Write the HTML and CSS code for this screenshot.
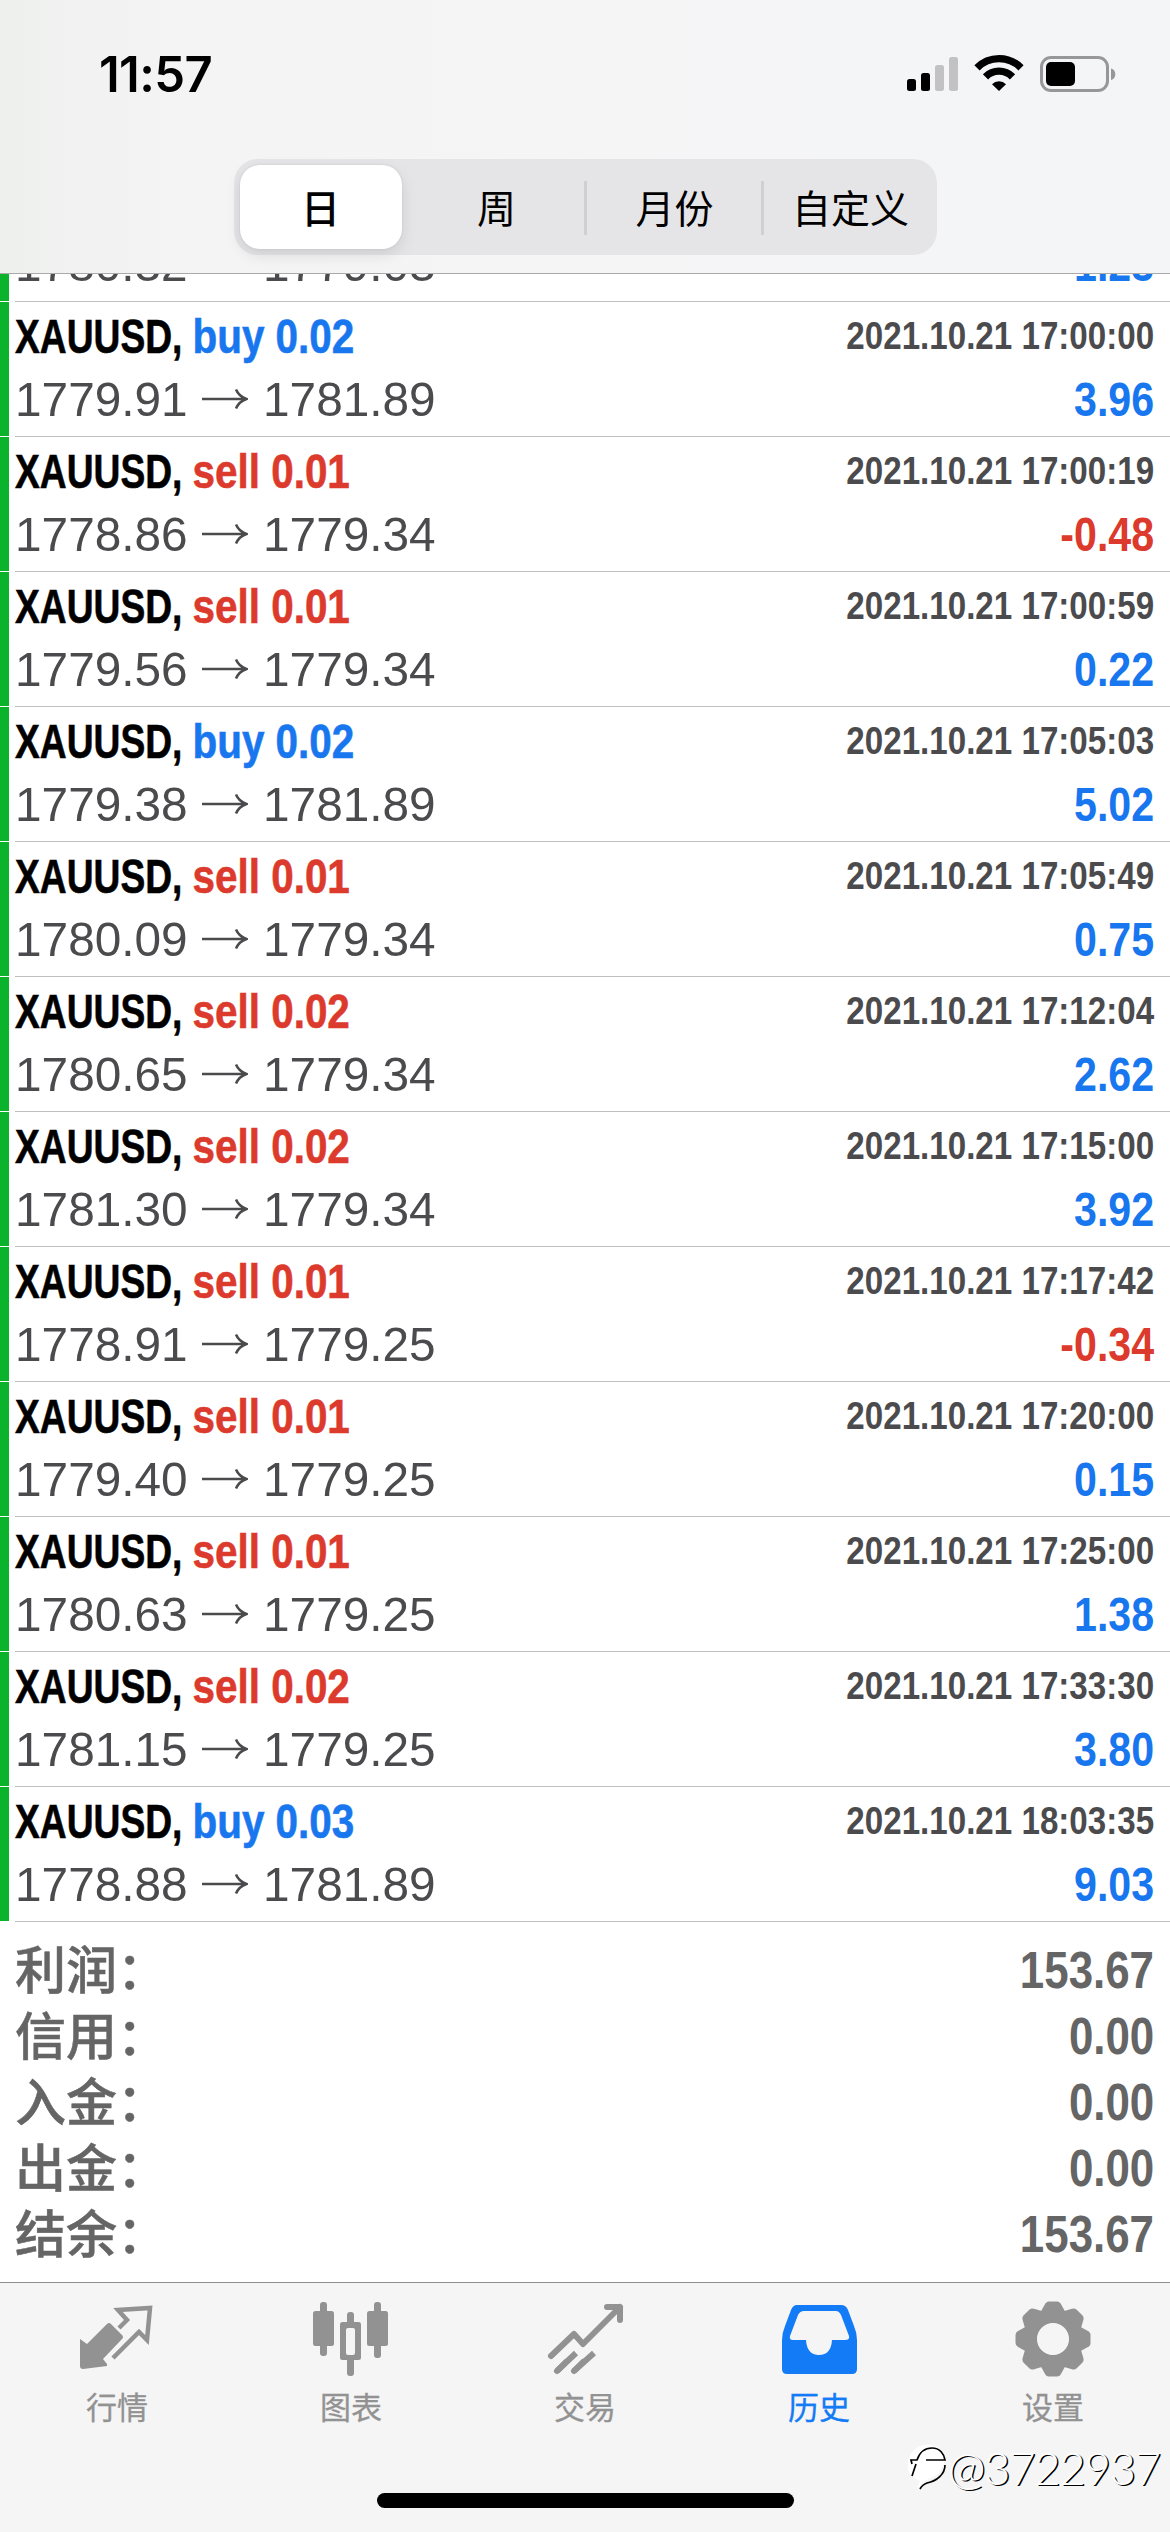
FILE: index.html
```html
<!DOCTYPE html>
<html lang="zh-CN">
<head>
<meta charset="utf-8">
<title>历史</title>
<link rel="stylesheet" href="styles.css">
</head>
<body>
<div class="screen">
  <header class="header">
    <div class="status">
      <span class="clock">11:57</span>
      <svg class="status-icons" width="214" height="44" viewBox="0 0 214 44">
        <g><rect x="1" y="25" width="9" height="12" rx="2.5"/><rect x="15" y="19" width="9" height="18" rx="2.5"/>
        <rect x="29" y="11" width="9" height="26" rx="2.5" fill="#c2c2c4"/><rect x="43" y="3" width="9" height="34" rx="2.5" fill="#c2c2c4"/></g>
        <g fill="none" stroke="#000" stroke-width="7.4"><path d="M71 13.800a31 31 0 0 1 44 0"/><path d="M79.500 22.800a19 19 0 0 1 27 0"/></g>
        <path d="M86 30.200a10 10 0 0 1 14 0L93 37z"/>
        <rect x="135.500" y="3.500" width="66" height="33" rx="9.500" fill="none" stroke="#97979a" stroke-width="3"/>
        <rect x="140" y="8" width="29" height="24" rx="5"/>
        <path d="M205 14.500a6 6 0 0 1 0 11.500z" fill="#97979a"/>
      </svg>
    </div>
    <nav class="segments">
      <span class="segment selected">日</span><span class="segment week">周</span><span class="segment divided month">月份</span><span class="segment divided last">自定义</span>
    </nav>
  </header>
  <main class="history" id="history"></main>
  <section class="totals">
    <div class="total"><span>利润：</span><b>153.67</b></div>
    <div class="total"><span>信用：</span><b>0.00</b></div>
    <div class="total"><span>入金：</span><b>0.00</b></div>
    <div class="total"><span>出金：</span><b>0.00</b></div>
    <div class="total"><span>结余：</span><b>153.67</b></div>
  </section>
  <footer class="tabbar">
    <div class="tab"><svg width="78" height="78" viewBox="0 0 78 78">
      <path fill="currentColor" d="M2 34l7 5 20-20q2-2 4 0l11 11q2 2 0 4L25 54l4 5v2L5 64q-3 0-3-3z"/>
      <path fill="none" stroke="currentColor" stroke-width="4.500" d="M41 23l8-8-9-10 32-2-3 32-8-8-26 26"/></svg><span>行情</span></div>
    <div class="tab"><svg width="78" height="78" viewBox="0 0 78 78" fill="currentColor">
      <rect x="1" y="6" width="21" height="35" rx="2.500"/><rect x="8" y="-3" width="7" height="54" rx="3"/>
      <rect x="55" y="6" width="21" height="35" rx="2.500"/><rect x="62" y="-3" width="7" height="56" rx="3"/>
      <rect x="35" y="7" width="7" height="14" rx="3"/><rect x="35" y="50" width="7" height="21" rx="3"/>
      <path fill-rule="evenodd" d="M30.500 17h16q2.500 0 2.500 2.500v33q0 2.500-2.500 2.500h-16q-2.500 0-2.500-2.500v-33q0-2.500 2.500-2.500zM34 25v23q0 2 2 2h5q2 0 2-2V25q0-2-2-2h-5q-2 0-2 2z"/></svg><span>图表</span></div>
    <div class="tab"><svg width="78" height="78" viewBox="0 0 78 78" fill="none" stroke="currentColor" stroke-width="6">
      <path stroke-linecap="round" stroke-linejoin="round" d="M5 51l23-22 9 10L74 2M61 2h13v13"/>
      <path stroke-linecap="round" d="M11 66l9-9M28 66l9-9"/><path d="M11 66l19-18M28 66l20-18"/></svg><span>交易</span></div>
    <div class="tab active"><svg width="78" height="78" viewBox="0 0 78 78">
      <path fill="currentColor" fill-rule="evenodd" d="M17 0h44q5 0 7 5l6 16q3 7 3 14v29q0 5-5 5H7q-5 0-5-5V35q0-7 3-14l6-16q2-5 6-5zM24 6q-4 0-6 4L10 31q-1 4 3 4h13q1 15 13 15t13-15h13q5 0 4-4l-8-21q-2-4-5-4z"/></svg><span>历史</span></div>
    <div class="tab"><svg width="78" height="78" viewBox="-39 -34 78 78" fill="currentColor"><g id="gear"></g></svg><span>设置</span></div>
    <div class="home"></div>
    <div class="watermark"><svg width="40" height="48" viewBox="0 0 40 48">
      <path fill="#fff" d="M4 8Q14-4 30 3c14 14 2 30-12 33L9 45l3-8Q-8 28 4 8z"/>
      <path fill="none" stroke="#000" stroke-width="1.700" d="M4 20l-1-4h6Q13 4 24 4c8 0 12 6 13 12H18M8 20L4 32M37 21c0 9-8 16-18 18q-5 2-7 6"/></svg><span>@3722937</span></div>
  </footer>
</div>
<script src="app.js"></script>
</body>
</html>
```
FILE: styles.css
```css
* { box-sizing: border-box; }
body { margin: 0; background: #fff; }
.screen { width: 1170px; height: 2532px; display: flex; flex-direction: column; overflow: hidden; font-family: "Liberation Sans", "Noto Sans CJK SC", sans-serif; }
.header { position: relative; z-index: 1; height: 274px; flex: none; border-bottom: 1px solid #aaa; background: linear-gradient(90deg, #edf0ed 0, #f2f2f2 90px, #f5f4f4 200px, #f5f5f6 600px, #f4f5f7 1170px); }
.status { height: 159px; padding: 54px 50px 0 99px; display: flex; justify-content: space-between; align-items: flex-start; }
.clock { font: 600 49px/42px Inter, sans-serif; letter-spacing: -.6px; }
.segments { width: 703px; height: 96px; margin: 0 auto; padding: 6px; border-radius: 24px; background: #e5e5e7; display: grid; grid-template-columns: 162px 182px 177px 170px; }
.segment { display: flex; align-items: center; justify-content: center; font: 400 39px/50px "Noto Sans CJK SC", sans-serif; color: #000; position: relative; padding-bottom: 3px; }
.segment.week { padding-left: 8px; }
.segment.month { padding-left: 5px; }
.segment.last { padding-left: 10px; }
.segment.selected { background: #fff; border-radius: 20px; font-weight: 500; box-shadow: 0 6px 16px rgba(0,0,0,.1), 0 0 3px rgba(0,0,0,.08); }
.divided::before { content: ""; position: absolute; left: 0; top: 16px; width: 3px; height: 54px; background: #d0d0d2; }
.history { height: 1648px; flex: none; display: flex; flex-direction: column; justify-content: flex-end; overflow: hidden; }
.deal { height: 135px; flex: none; display: flex; border-bottom: 1px solid #fff; }
.bar { width: 9px; height: 134px; background: #0bb32c; flex: none; }
.body { flex: 1; height: 135px; margin-left: 6px; padding-right: 16px; border-bottom: 1px solid #c0c0c2; display: grid; grid-template-rows: 65px 63px; grid-template-columns: 1fr auto; white-space: nowrap; }
.body > * { align-self: center; }
.name, .date, .profit { font-weight: 700; }
.name { font-size: 49px; line-height: 60px; transform: scaleX(.825); transform-origin: left; padding-top: 3px; -webkit-text-stroke: .6px currentColor; }
.name i { font-style: normal; display: inline-block; transform: scaleX(.92); transform-origin: left; margin-right: -19px; }
.date { font-size: 39px; line-height: 50px; color: #4b4b4e; transform: scaleX(.85); transform-origin: right; padding-top: 3px; }
.profit { font-size: 49px; line-height: 60px; text-align: right; transform: scaleX(.84); transform-origin: right; }
.prices { display: flex; align-items: center; color: #4b4b4e; }
.price { width: 187px; font-size: 49px; line-height: 60px; }
.price span { display: inline-block; transform: scaleX(.975); transform-origin: left; }
.arrow { width: 46px; height: 22px; margin-right: 15px; }
.blue { color: #1877ee; }
.red { color: #dc3a2c; }
.totals { flex: 1; padding: 15px 16px 0 15px; color: #656565; }
.total { height: 66px; display: flex; justify-content: space-between; align-items: center; }
.total span { font: 500 51px/66px "Noto Sans CJK SC", sans-serif; -webkit-text-stroke: .5px currentColor; padding-bottom: 7px; }
.total b { font-size: 51px; line-height: 66px; transform: scaleX(.86); transform-origin: right; padding-top: 1px; }
.tabbar { position: relative; height: 250px; flex: none; border-top: 1px solid #8e8e90; background: #f5f5f5; display: grid; grid-template-columns: repeat(5, 1fr); align-items: start; }
.tab { height: 160px; padding-top: 22px; display: flex; flex-direction: column; align-items: center; color: #929292; font: 400 31px/40px "Noto Sans CJK SC", sans-serif; }
.tab svg { overflow: visible; }
.tab span { margin-top: 3px; -webkit-text-stroke: .3px currentColor; }
.active { color: #147bf6; }
.home { position: absolute; left: 377px; top: 210px; width: 417px; height: 15px; border-radius: 8px; background: #000; }
.watermark { position: absolute; right: 10px; top: 157px; display: flex; align-items: center; color: #fff; font: 300 45px/56px Lato, sans-serif; letter-spacing: -1px; text-shadow: 1.500px 1px 0 #000; }
```
FILE: app.js
```js
const deals = [
  ["sell", "0.02", "1780.32", "1779.03", "2021.10.21 16:55:00", "1.23"],
  ["buy", "0.02", "1779.91", "1781.89", "2021.10.21 17:00:00", "3.96"],
  ["sell", "0.01", "1778.86", "1779.34", "2021.10.21 17:00:19", "-0.48"],
  ["sell", "0.01", "1779.56", "1779.34", "2021.10.21 17:00:59", "0.22"],
  ["buy", "0.02", "1779.38", "1781.89", "2021.10.21 17:05:03", "5.02"],
  ["sell", "0.01", "1780.09", "1779.34", "2021.10.21 17:05:49", "0.75"],
  ["sell", "0.02", "1780.65", "1779.34", "2021.10.21 17:12:04", "2.62"],
  ["sell", "0.02", "1781.30", "1779.34", "2021.10.21 17:15:00", "3.92"],
  ["sell", "0.01", "1778.91", "1779.25", "2021.10.21 17:17:42", "-0.34"],
  ["sell", "0.01", "1779.40", "1779.25", "2021.10.21 17:20:00", "0.15"],
  ["sell", "0.01", "1780.63", "1779.25", "2021.10.21 17:25:00", "1.38"],
  ["sell", "0.02", "1781.15", "1779.25", "2021.10.21 17:33:30", "3.80"],
  ["buy", "0.03", "1778.88", "1781.89", "2021.10.21 18:03:35", "9.03"]
];
document.getElementById("history").innerHTML = deals.map(([side, lot, from, to, date, profit]) => `
  <div class="deal"><div class="bar"></div><div class="body">
    <div class="name"><i>XAUUSD,</i> <span class="${side === "buy" ? "blue" : "red"}">${side} ${lot}</span></div>
    <div class="date">${date}</div>
    <div class="prices"><div class="price"><span>${from}</span></div>
      <svg class="arrow" viewBox="0 0 46 22" fill="none" stroke="currentColor" stroke-width="2.600"><path d="M0 11h44M34 1.500q3 7 10.500 9.500Q37 13.500 34 20.500"/></svg>
      <div class="price"><span>${to}</span></div></div>
    <div class="profit ${profit < 0 ? "red" : "blue"}">${profit}</div>
  </div></div>`).join("");

// Eight rounded teeth around a ring with a round hole.
const tooth = "M-14-24L-8.500-34Q-7-37.500-4-37.500H4Q7-37.500 8.500-34L14-24z";
document.getElementById("gear").innerHTML =
  Array.from({ length: 8 }, (_, i) => `<path d="${tooth}" transform="rotate(${i * 45})"/>`).join("") +
  '<circle r="23" fill="none" stroke="currentColor" stroke-width="14"/><circle r="15.500" fill="#f5f5f5"/>';
```
